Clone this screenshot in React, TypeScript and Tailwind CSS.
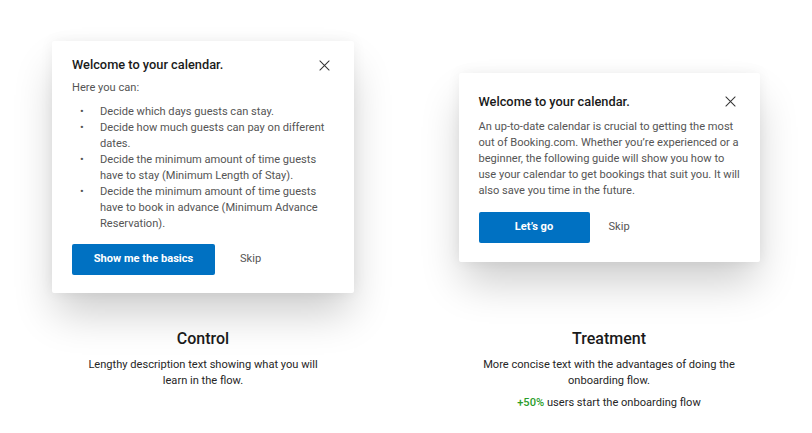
import React from 'react';

const CloseIcon = () => (
  <svg width="11" height="11" viewBox="0 0 12 12" fill="none" className="text-[#333]">
    <path d="M1 1L11 11M11 1L1 11" stroke="currentColor" strokeWidth="1.1" strokeLinecap="round" />
  </svg>
);

const cardShadow =
  'shadow-[0_24px_40px_-4px_rgba(0,0,0,0.2),0_0_14px_rgba(0,0,0,0.06)]';

const bullets = [
  'Decide which days guests can stay.',
  'Decide how much guests can pay on different dates.',
  'Decide the minimum amount of time guests have to stay (Minimum Length of Stay).',
  'Decide the minimum amount of time guests have to book in advance (Minimum Advance Reservation).',
];

const ControlCard = () => (
  <div className={`w-[302px] rounded-[2px] bg-white px-5 pt-[14px] pb-[18px] ${cardShadow}`}>
    <div className="flex items-center justify-between">
      <h3 className="text-[12.8px] leading-[20px] font-medium text-[#1a1a1a]">
        Welcome to your calendar.
      </h3>
      <span className="mr-[4px]">
        <CloseIcon />
      </span>
    </div>
    <p className="mt-[5px] text-[11.1px] leading-[16px] text-[#555]">Here you can:</p>
    <ul className="mt-[8px] text-[11.1px] leading-[16px] text-[#555]">
      {bullets.map((b) => (
        <li key={b} className="flex">
          <span className="w-[28px] shrink-0 pl-[8px]">•</span>
          <span>{b}</span>
        </li>
      ))}
    </ul>
    <div className="mt-[12px] flex items-center">
      <button className="h-[31px] w-[143px] rounded-[2px] bg-[#0071c2] text-[11.1px] font-bold text-white">
        Show me the basics
      </button>
      <span className="ml-[25px] text-[11.1px] text-[#555]">Skip</span>
    </div>
  </div>
);

const TreatmentCard = () => (
  <div className={`w-[301px] rounded-[2px] bg-white px-5 pt-[19px] pb-[19px] ${cardShadow}`}>
    <div className="flex items-center justify-between">
      <h3 className="text-[12.8px] leading-[20px] font-medium text-[#1a1a1a]">
        Welcome to your calendar.
      </h3>
      <span className="mr-[4px]">
        <CloseIcon />
      </span>
    </div>
    <p className="mt-[7px] mr-[-3px] text-[11.1px] leading-[16px] text-[#555]">
      An up-to-date calendar is crucial to getting the most out of Booking.com. Whether you’re
      experienced or a beginner, the following guide will show you how to use your calendar to get
      bookings that suit you. It will also save you time in the future.
    </p>
    <div className="mt-[13px] flex items-center">
      <button className="h-[31px] w-[111px] rounded-[2px] bg-[#0071c2] text-[11.1px] font-bold text-white">
        Let’s go
      </button>
      <span className="ml-[19px] text-[11.1px] text-[#555]">Skip</span>
    </div>
  </div>
);

const Column = ({
  card,
  title,
  text,
  textWidth,
  extra,
}: {
  card: React.ReactNode;
  title: string;
  text: string;
  textWidth: string;
  extra?: React.ReactNode;
}) => (
  <div className="flex flex-col items-center">
    <div className="flex h-[320px] items-center justify-center pt-[14px]">{card}</div>
    <h2 className="mt-[9px] text-[16px] leading-[20px] font-medium text-[#1a1a1a]">{title}</h2>
    <p className={`mt-[8px] text-center text-[11.1px] leading-[16px] text-[#262626] ${textWidth}`}>
      {text}
    </p>
    {extra}
  </div>
);

export default function App() {
  return (
    <div
      className="grid h-[433px] w-[812px] grid-cols-2 bg-white"
      style={{ fontFamily: 'Roboto, "Noto Sans", sans-serif' }}
    >
      <Column
        card={<ControlCard />}
        title="Control"
        text="Lengthy description text showing what you will learn in the flow."
        textWidth="w-[240px]"
      />
      <Column
        card={<TreatmentCard />}
        title="Treatment"
        text="More concise text with the advantages of doing the onboarding flow."
        textWidth="w-[290px]"
        extra={
          <p className="mt-[6px] text-[11.1px] leading-[16px] text-[#262626]">
            <span className="font-medium text-[#2a9d2a]">+50%</span> users start the onboarding
            flow
          </p>
        }
      />
    </div>
  );
}
